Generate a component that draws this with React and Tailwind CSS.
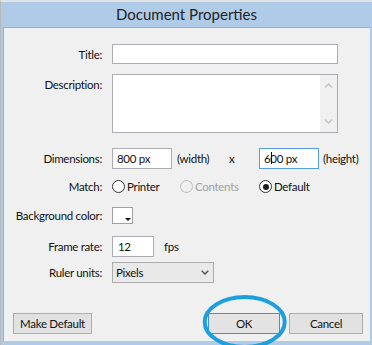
import React from 'react';

const font = { fontFamily: 'Lato, "Noto Sans", sans-serif' };

function Label({ children, top = false }) {
  return (
    <div className={`w-[99px] shrink-0 text-right pr-[1px] ${top ? 'self-start pt-[3px]' : ''}`}>
      {children}
    </div>
  );
}

function Radio({ checked, disabled, label, className = '' }) {
  return (
    <div className={`flex items-center ${className}`}>
      <span
        className={`w-[13px] h-[13px] rounded-full border flex items-center justify-center ${
          disabled ? 'border-[#bcbcbc] bg-[#f0f0f0]' : 'border-[#333] bg-white'
        }`}
      >
        {checked && <span className="w-[6px] h-[6px] rounded-full bg-[#1a1a1a]" />}
      </span>
      <span className={`ml-[2px] ${disabled ? 'text-[#a0a0a0]' : ''}`}>{label}</span>
    </div>
  );
}

export default function App() {
  return (
    <div
      style={font}
      className="relative w-[372px] h-[345px] overflow-hidden bg-[#afcbe7] border-t-2 border-t-[#e2e2e2] border-l border-l-[#b8b8b8] text-[11.5px] leading-[15px] tracking-[-0.3px] text-[#111] flex flex-col"
    >
      <div className="h-[25px] flex items-center justify-center text-[15px] tracking-normal text-[#222]">
        Document Properties
      </div>

      <div className="ml-[2px] mr-[2px] h-[314px] bg-[#f0f0f0] border-t border-l border-[#8fb1d3] flex flex-col pt-[16px]">
        {/* Title */}
        <div className="flex items-center">
          <Label>Title:</Label>
          <div className="ml-[9px] w-[226px] h-[20px] bg-white border border-[#abadb3]" />
        </div>

        {/* Description */}
        <div className="flex mt-[10px]">
          <Label top>Description:</Label>
          <div className="ml-[9px] w-[226px] h-[59px] bg-white border border-[#abadb3] flex justify-end">
            <div className="w-[17px] h-full bg-[#f0f0f0] flex flex-col items-center justify-between py-[8px]">
              <svg width="9" height="5" viewBox="0 0 9 5">
                <path d="M1 4.5 L4.5 1 L8 4.5" fill="none" stroke="#c4c4c4" strokeWidth="1.4" />
              </svg>
              <svg width="9" height="5" viewBox="0 0 9 5">
                <path d="M1 0.5 L4.5 4 L8 0.5" fill="none" stroke="#c4c4c4" strokeWidth="1.4" />
              </svg>
            </div>
          </div>
        </div>

        {/* Dimensions */}
        <div className="flex items-center mt-[15px]">
          <Label>Dimensions:</Label>
          <div className="ml-[9px] w-[60px] h-[21px] bg-white border border-[#abadb3] flex items-center pl-[4px]">
            800 px
          </div>
          <span className="ml-[5px] w-[52px]">(width)</span>
          <span className="w-[30px]">x</span>
          <div className="relative w-[60px] h-[21px] bg-white border border-[#569de5] flex items-center pl-[4px]">
            600 px
            <span className="absolute left-[11px] top-[3px] w-[1px] h-[12px] bg-[#111]" />
          </div>
          <span className="ml-[4px]">(height)</span>
        </div>

        {/* Match */}
        <div className="flex items-center mt-[10px]">
          <Label>Match:</Label>
          <div className="ml-[9px] flex items-center">
            <Radio label="Printer" className="w-[68px]" />
            <Radio label="Contents" disabled className="w-[79px]" />
            <Radio label="Default" checked />
          </div>
        </div>

        {/* Background color */}
        <div className="flex items-center mt-[13px]">
          <Label>Background color:</Label>
          <div className="relative ml-[9px] w-[21px] h-[17px] bg-white border border-[#a0a0a0]">
            <svg className="absolute right-[1px] bottom-[1px]" width="6" height="4" viewBox="0 0 6 4">
              <path d="M0 0 H6 L3 3 Z" fill="#111" />
            </svg>
          </div>
        </div>

        {/* Frame rate */}
        <div className="flex items-center mt-[12px]">
          <Label>Frame rate:</Label>
          <div className="ml-[9px] w-[42px] h-[21px] bg-white border border-[#abadb3] flex items-center pl-[5px]">
            12
          </div>
          <span className="ml-[10px]">fps</span>
        </div>

        {/* Ruler units */}
        <div className="flex items-center mt-[5px]">
          <Label>Ruler units:</Label>
          <div className="ml-[9px] w-[102px] h-[21px] bg-[#e9e9e9] border border-[#acacac] flex items-center justify-between pl-[3px] pr-[4px]">
            <span>Pixels</span>
            <svg width="8" height="5" viewBox="0 0 8 5">
              <path d="M0.7 0.7 L4 4 L7.3 0.7" fill="none" stroke="#555" strokeWidth="1.5" />
            </svg>
          </div>
        </div>

        {/* Buttons */}
        <div className="mt-auto mb-[7px] flex items-center">
          <button className="ml-[9px] w-[79px] h-[21px] bg-[#e1e1e1] border border-[#adadad] flex items-center justify-center">
            Make Default
          </button>
          <div className="flex-1" />
          <button className="w-[72px] h-[21px] bg-[#e3e3e3] border border-[#3c93dc] flex items-center justify-center">
            OK
          </button>
          <button className="ml-[9px] w-[74px] h-[21px] mr-[7px] bg-[#e1e1e1] border border-[#adadad] flex items-center justify-center">
            Cancel
          </button>
        </div>
      </div>

      <div className="flex-1" />

      <svg className="absolute left-[197px] top-[290px] pointer-events-none" width="94" height="60" viewBox="0 0 94 60">
        <ellipse cx="46.7" cy="30" rx="40" ry="25" fill="none" stroke="#1b9fdf" strokeWidth="4" />
      </svg>
    </div>
  );
}
